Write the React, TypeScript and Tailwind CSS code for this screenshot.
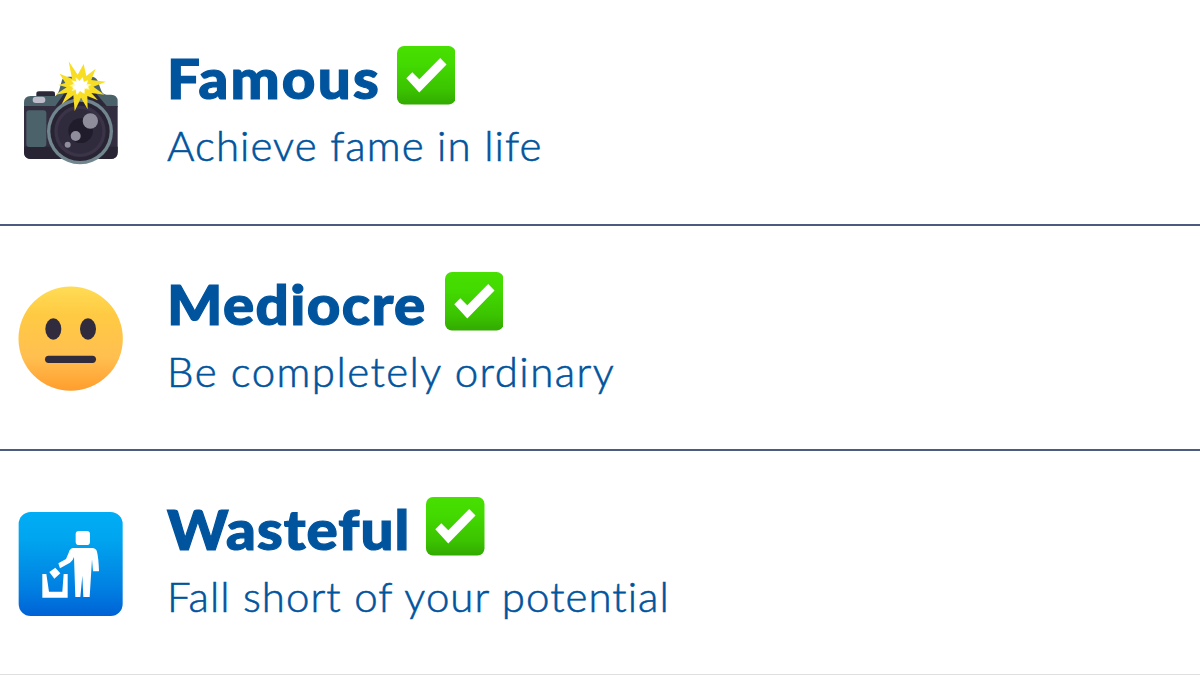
import React from 'react';

const Camera: React.FC = () => (
  <svg viewBox="0 0 375 375" className="w-[125px] h-[125px]">
    <path d="M79 146V131Q79 124 87 124H127Q135 124 135 131V146Z" fill="#2d2838" />
    <path d="M42 172V158Q42 138 62 138H136Q146 132 150 112L156 90Q160 80 176 80H244Q257 80 263 92L273 120Q278 134 290 134H303Q323 134 323 154V172Z" fill="#4b626b" />
    <path d="M42 168H323V306Q323 327 302 327H63Q42 327 42 306Z" fill="#332e3f" />
    <path d="M42 290H323V306Q323 327 302 327H63Q42 327 42 306Z" fill="#292434" />
    <path d="M136 168L170 120L250 120L290 168Z" fill="#2d2838" />
    <rect x="49" y="181" width="60" height="110" rx="9" fill="#4b626b" />
    <rect x="68" y="140" width="38" height="19" rx="9" fill="#bfbccb" />
    <circle cx="210" cy="244" r="99" fill="#71868f" />
    <circle cx="210" cy="244" r="89" fill="#292434" />
    <circle cx="210" cy="244" r="77" fill="#3b3449" />
    <circle cx="210" cy="244" r="67" fill="#302a3d" />
    <circle cx="212" cy="242" r="37" fill="#211c2c" />
    <circle cx="241" cy="213" r="23" fill="#8f8d9b" />
    <circle cx="197" cy="258" r="15" fill="#8f8d9b" />
    <circle cx="173" cy="284" r="9" fill="#8f8d9b" />
    <path d="M176 34L203 74L221 42L229 78L257 56L244 90L288 95L250 110L283 134L244 129L264 151L232 138L233 178L213 143L194 184L190 136L155 163L172 128L136 134L170 112L145 105L166 99L149 71L186 86Z" fill="#f7de24" />
    <path d="M199 82L209 93L218 81L222 95L234 90L231 101L245 104L233 110L240 119L225 117L224 132L211 123L201 136L197 120L184 124L192 112L178 107L191 101L184 91L199 94Z" fill="#fff8ac" />
    <path d="M196 83L208 94L217 83L221 97L233 93L229 105L238 112L223 115L221 130L209 122L199 133L198 118L186 114L195 105L189 94L201 96Z" fill="#fff" />
  </svg>
);

const NeutralFace: React.FC = () => (
  <svg viewBox="0 0 375 375" className="w-[125px] h-[125px]">
    <defs>
      <linearGradient id="face" x1="0" y1="0" x2="0" y2="1">
        <stop offset="0" stopColor="#ffdc55" />
        <stop offset=".27" stopColor="#ffca43" />
        <stop offset=".68" stopColor="#ffbf50" />
        <stop offset="1" stopColor="#ff9d2d" />
      </linearGradient>
    </defs>
    <circle cx="182" cy="191" r="156.5" fill="url(#face)" />
    <ellipse cx="130" cy="162" rx="24" ry="32" fill="#302b3d" />
    <ellipse cx="234" cy="162" rx="24" ry="32" fill="#302b3d" />
    <rect x="105" y="242" width="153" height="22" rx="11" fill="#302b3d" />
  </svg>
);

const LitterBin: React.FC = () => (
  <svg viewBox="0 0 375 375" className="w-[125px] h-[125px]">
    <defs>
      <linearGradient id="bin" x1="0" y1="0" x2="0" y2="1">
        <stop offset="0" stopColor="#00aef5" />
        <stop offset=".26" stopColor="#00a5ef" />
        <stop offset=".74" stopColor="#007fe2" />
        <stop offset="1" stopColor="#0062d5" />
      </linearGradient>
    </defs>
    <rect x="26" y="36" width="312" height="312" rx="36" fill="url(#bin)" />
    <g fill="#fff">
      <rect x="197" y="93" width="43" height="42" rx="10" />
      <path d="M190 144H246Q258 144 261 155Q266 175 267 214H249L246 178L239 291H220L217 227L211 291H196L192 171Q189 182 180 188L150 205L145 190L168 177L176 158Q180 144 190 144Z" />
      <path d="M118 216L136 203L151 220L133 236Z" />
      <path d="M97 222H109L117 275H157L161 222H173V293H97Z" />
    </g>
  </svg>
);

const CheckMark: React.FC<{ id: string }> = ({ id }) => (
  <svg viewBox="0 0 176 176" className="w-[58.5px] h-[58.5px] shrink-0">
    <defs>
      <linearGradient id={id} x1="0" y1="0" x2="0" y2="1">
        <stop offset="0" stopColor="#47e000" />
        <stop offset=".3" stopColor="#43da00" />
        <stop offset=".75" stopColor="#3bc300" />
        <stop offset="1" stopColor="#32aa00" />
      </linearGradient>
    </defs>
    <rect width="176" height="176" rx="21" fill={`url(#${id})`} />
    <path d="M28 97L46 79L67 100L130 36L149 56L67 140Z" fill="#fff" />
  </svg>
);

const traits = [
  {
    title: 'Famous',
    description: 'Achieve fame in life',
    icon: Camera,
    row: 'h-[226px]',
    iconClass: 'pt-[50px]',
    titleClass: 'w-[229.5px] tracking-[2.1px]',
    descriptionClass: 'tracking-[1.07px]',
  },
  {
    title: 'Mediocre',
    description: 'Be completely ordinary',
    icon: NeutralFace,
    row: 'h-[225px]',
    iconClass: 'pt-[49px]',
    titleClass: 'w-[277.5px] tracking-[1.3px]',
    descriptionClass: 'tracking-[1.45px]',
  },
  {
    title: 'Wasteful',
    description: 'Fall short of your potential',
    icon: LitterBin,
    row: 'h-[224px]',
    iconClass: 'pt-[49px]',
    titleClass: 'w-[259px] tracking-[1px]',
    descriptionClass: 'tracking-[1.03px]',
  },
];

const App: React.FC = () => {
  return (
    <main className="w-[1200px] h-[675px] bg-white overflow-hidden font-['Lato',sans-serif] text-[#00549d]">
      {traits.map((trait) => (
        <section
          key={trait.title}
          className={`${trait.row} flex items-start border-b-2 border-[#4c5c80] last:border-b last:border-[#dfdfdf]`}
        >
          <div className={`${trait.iconClass} pl-[10px] w-[167px] shrink-0`}>
            <trait.icon />
          </div>
          <div className="pt-[46px] whitespace-nowrap">
            <div className="flex h-[58.5px]">
              <h2 className={`${trait.titleClass} shrink-0 origin-left scale-x-[1.06] text-[55px] leading-[65px] font-black [-webkit-text-stroke:1.2px_#00549d]`}>
                {trait.title}
              </h2>
              <CheckMark id={`check-${trait.title}`} />
            </div>
            <p className={`${trait.descriptionClass} mt-[14.5px] text-[42px] leading-[52px] font-light [-webkit-text-stroke:0.6px_#00549d]`}>
              {trait.description}
            </p>
          </div>
        </section>
      ))}
    </main>
  );
};

export default App;
